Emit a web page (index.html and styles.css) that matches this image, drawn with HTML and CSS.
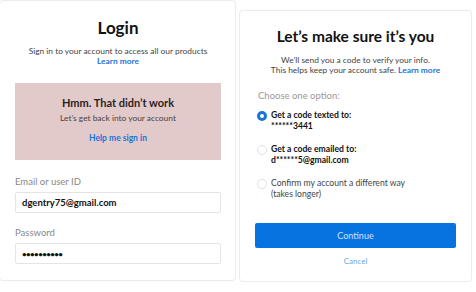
FILE: index.html
```html
<!DOCTYPE html>
<html lang="en">

<head>
    <meta charset="UTF-8">
    <meta name="viewport" content="width=device-width, initial-scale=1.0">
    <title>Login</title>
    <link rel="stylesheet" href="styles.css">
</head>

<body>
    <div class="page">
        <div class="card login-card">
            <h1>Login</h1>
            <p class="intro">Sign in to your account to access all our products<br>
                <a href="#" class="link">Learn more</a></p>

            <div class="error-box">
                <h2>Hmm. That didn’t work</h2>
                <p>Let’s get back into your account</p>
                <a href="#" class="link">Help me sign in</a>
            </div>

            <label class="field-label" for="user">Email or user ID</label>
            <div class="input" id="user">dgentry75@gmail.com</div>

            <label class="field-label" for="pass">Password</label>
            <div class="input dots" id="pass">••••••••••</div>
        </div>

        <div class="card verify-card">
            <h1>Let’s make sure it’s you</h1>
            <p class="intro">We’ll send you a code to verify your info.<br>
                This helps keep your account safe. <a href="#" class="link">Learn more</a></p>

            <p class="choose">Choose one option:</p>

            <div class="option">
                <span class="radio checked"></span>
                <span class="option-text strong">Get a code texted to:<br>******3441</span>
            </div>
            <div class="option">
                <span class="radio"></span>
                <span class="option-text strong">Get a code emailed to:<br>d******5@gmail.com</span>
            </div>
            <div class="option">
                <span class="radio"></span>
                <span class="option-text">Confirm my account a different way<br>(takes longer)</span>
            </div>

            <button class="continue">Continue</button>
            <a href="#" class="cancel">Cancel</a>
        </div>
    </div>
</body>

</html>
```

FILE: styles.css
```css
body {
    margin: 0;
    background: #fff;
    font-family: Lato, "Open Sans", sans-serif;
    color: #222;
}

.page {
    display: flex;
    align-items: flex-start;
    gap: 3px;
    width: 472px;
}

.card {
    background: #fff;
    border: 1px solid #ececec;
    border-radius: 4px;
    box-shadow: 0 0 2px rgba(0, 0, 0, 0.04);
    box-sizing: border-box;
}

.login-card {
    width: 237px;
    height: 281px;
    margin-left: -1px;
    padding: 16px 14px 0 15px;
    text-align: center;
}

.verify-card {
    width: 233px;
    height: 272px;
    margin-top: 10px;
    padding: 16px 15px 0 15px;
    text-align: center;
}

h1 {
    margin: 0;
    font-size: 17px;
    font-weight: 700;
    color: #111;
}

.verify-card h1 {
    font-size: 15.5px;
}

.intro {
    margin: 8px 0 0;
    font-size: 8.4px;
    line-height: 10px;
    color: #444;
}

.verify-card .intro {
    margin-top: 10px;
}

.link {
    color: #1a73d9;
    font-weight: 700;
    text-decoration: none;
}

.error-box {
    margin: 17px 0 0;
    height: 77px;
    box-sizing: border-box;
    padding: 13px 0 0;
    background: #e3caca;
}

.error-box h2 {
    margin: 0;
    font-size: 11px;
    font-weight: 700;
    color: #2b2222;
}

.error-box p {
    margin: 4px 0 0;
    font-size: 8.4px;
    color: #4a3f3f;
}

.error-box .link {
    display: inline-block;
    margin-top: 10px;
    font-size: 8.5px;
}

.field-label {
    display: block;
    margin: 16px 0 0;
    text-align: left;
    font-size: 9.5px;
    color: #888;
}

.input {
    margin-top: 5px;
    height: 21px;
    box-sizing: border-box;
    padding: 0 6px;
    display: flex;
    align-items: center;
    border: 1px solid #e4e4e4;
    border-radius: 2px;
    text-align: left;
    font-size: 9.5px;
    font-weight: 700;
    color: #111;
}

.input + .field-label {
    margin-top: 14px;
}

.dots {
    font-size: 8px;
    letter-spacing: -0.6px;
}

.choose {
    margin: 15px 0 0 3px;
    text-align: left;
    font-size: 9.5px;
    color: #999;
}

.option {
    display: flex;
    align-items: flex-start;
    gap: 4px;
    margin: 9px 0 0 2px;
    text-align: left;
}

.option + .option {
    margin-top: 12px;
}

.radio {
    flex: none;
    width: 10px;
    height: 10px;
    margin-top: 0.5px;
    border: 1px solid #e2e2e2;
    border-radius: 50%;
    box-sizing: border-box;
}

.radio.checked {
    border: 3px solid #1a73d9;
    background: #fff;
}

.option-text {
    font-size: 8.6px;
    line-height: 11px;
    color: #444;
}

.option-text.strong {
    font-weight: 700;
    color: #111;
}

.continue {
    display: block;
    width: 100%;
    margin-top: 23px;
    height: 25px;
    border: none;
    border-radius: 2px;
    background: #0673e0;
    color: #cfe4fb;
    font-family: inherit;
    font-size: 9px;
}

.cancel {
    display: inline-block;
    margin-top: 8px;
    font-size: 8px;
    color: #6aa8ea;
    text-decoration: none;
}
```
